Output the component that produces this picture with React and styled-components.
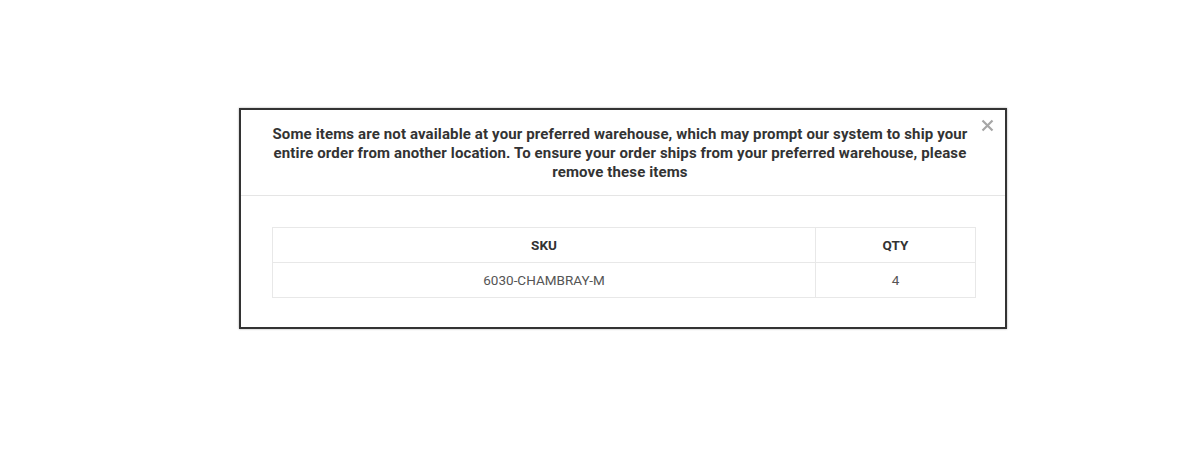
import React from "react";
import styled, { createGlobalStyle } from "styled-components";

const Global = createGlobalStyle`
  html, body { margin: 0; padding: 0; background: #fff; }
  body { font-family: Roboto, "Noto Sans", Arial, sans-serif; }
`;

const Page = styled.div`
  width: 1200px;
  height: 450px;
  padding: 108px 0 0 239px;
  box-sizing: border-box;
`;

const Modal = styled.div`
  position: relative;
  width: 768px;
  box-sizing: border-box;
  border: 2px solid #333;
  background: #fff;
  box-shadow: 0 0 2px rgba(0, 0, 0, 0.35);
`;

const Header = styled.div`
  padding: 15px 33px 13px 27px;
  border-bottom: 1px solid #e5e5e5;
  text-align: center;
`;

const Title = styled.h4`
  margin: 0;
  font-size: 15px;
  line-height: 19px;
  letter-spacing: 0.13px;
  font-weight: 700;
  color: #333;
`;

const Close = styled.button`
  position: absolute;
  top: 9px;
  right: 11px;
  width: 13px;
  height: 13px;
  padding: 0;
  border: 0;
  background: none;
  cursor: pointer;
  display: flex;
`;

const Body = styled.div`
  padding: 31px 29px 29px 31px;
`;

const Table = styled.table`
  width: 100%;
  border-collapse: collapse;
  font-size: 13.5px;
  color: #555;
`;

const Th = styled.th`
  border: 1px solid #e8e8e8;
  height: 34px;
  padding: 0 8px;
  font-weight: 700;
  color: #333;
  text-align: center;
  width: ${(p) => p.$w || "auto"};
`;

const Td = styled.td`
  border: 1px solid #e8e8e8;
  height: 34px;
  padding: 0 8px;
  text-align: center;
`;

export default function App() {
  return (
    <>
      <Global />
      <Page>
        <Modal>
          <Close aria-label="Close">
            <svg width="13" height="13" viewBox="0 0 13 13">
              <path d="M1.5 1.5 L11.5 11.5 M11.5 1.5 L1.5 11.5" stroke="#a6a6a6" strokeWidth="2.2" />
            </svg>
          </Close>
          <Header>
            <Title>
              Some items are not available at your preferred warehouse, which may prompt our system to ship your
              entire order from another location. To ensure your order ships from your preferred warehouse, please
              remove these items
            </Title>
          </Header>
          <Body>
            <Table>
              <thead>
                <tr>
                  <Th>SKU</Th>
                  <Th $w="143px">QTY</Th>
                </tr>
              </thead>
              <tbody>
                <tr>
                  <Td>6030-CHAMBRAY-M</Td>
                  <Td>4</Td>
                </tr>
              </tbody>
            </Table>
          </Body>
        </Modal>
      </Page>
    </>
  );
}
